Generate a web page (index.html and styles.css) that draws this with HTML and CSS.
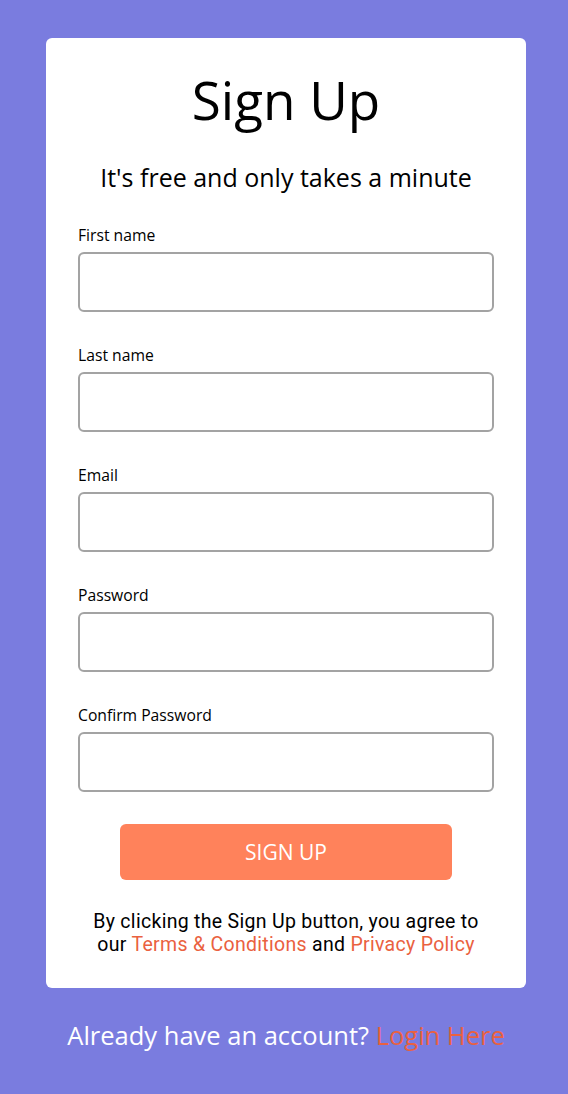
FILE: index.html
```html
<!DOCTYPE html>
<html lang="en">
<head>
<meta charset="utf-8">
<title>Sign Up</title>
<link rel="stylesheet" href="styles.css">
</head>
<body>
<main class="page">
  <form class="card">
    <h1 class="title">Sign Up</h1>
    <p class="subtitle">It's free and only takes a minute</p>
    <div class="fields">
      <label class="field"><span class="label">First name</span><input class="input" type="text"></label>
      <label class="field"><span class="label">Last name</span><input class="input" type="text"></label>
      <label class="field"><span class="label">Email</span><input class="input" type="email"></label>
      <label class="field"><span class="label">Password</span><input class="input" type="password"></label>
      <label class="field"><span class="label">Confirm Password</span><input class="input" type="password"></label>
    </div>
    <button class="btn" type="button">SIGN UP</button>
    <p class="terms"><span class="line">By clicking the Sign Up button, you agree to</span> <span class="line">our <a href="#" class="link">Terms &amp; Conditions</a> and <a href="#" class="link">Privacy Policy</a></span></p>
  </form>
  <p class="footer">Already have an account? <a href="#" class="link">Login Here</a></p>
</main>
</body>
</html>
```
FILE: styles.css
```css
* { box-sizing: border-box; }
html, body { margin: 0; padding: 0; }
body {
  background: #7a7cdf;
  font-family: "Open Sans", "Noto Sans", sans-serif;
  color: #000;
  min-height: 1094px;
}
.page {
  display: flex;
  flex-direction: column;
  align-items: center;
  padding: 38px 0 0 4px;
}
.card {
  width: 480px;
  background: #fff;
  border-radius: 6px;
  padding: 30px 32px 32px;
  display: flex;
  flex-direction: column;
}
.title {
  margin: 0;
  font-weight: 400;
  font-size: 53px;
  line-height: 64px;
  text-align: center;
}
.subtitle {
  margin: 30px 0 0;
  font-size: 25px;
  line-height: 30px;
  text-align: center;
}
.fields {
  margin-top: 33px;
  display: flex;
  flex-direction: column;
  gap: 33px;
}
.field {
  display: flex;
  flex-direction: column;
  gap: 7px;
}
.label {
  font-size: 15.7px;
  line-height: 20px;
}
.input {
  height: 60px;
  width: 100%;
  border: 2px solid #a3a3a3;
  border-radius: 6px;
  font: inherit;
  padding: 0 12px;
  background: #fff;
}
.btn {
  margin: 32px auto 0;
  width: 332px;
  height: 56px;
  border: 0;
  border-radius: 6px;
  background: #ff825b;
  color: #fff;
  font-family: inherit;
  font-size: 21px;
}
.terms {
  margin: 30px 0 0;
  font-family: Roboto, "Open Sans", sans-serif;
  font-size: 19.5px;
  line-height: 23px;
  letter-spacing: 0.3px;
  text-align: center;
  display: flex;
  flex-direction: column;
  align-items: center;
}
.line {
  display: block;
  height: 23px;
  line-height: 23px;
  white-space: nowrap;
}
.link {
  color: #ea6140;
  text-decoration: none;
}
.footer {
  margin: 32px 0 0;
  font-size: 25.5px;
  line-height: 30px;
  color: #fff;
}
```
